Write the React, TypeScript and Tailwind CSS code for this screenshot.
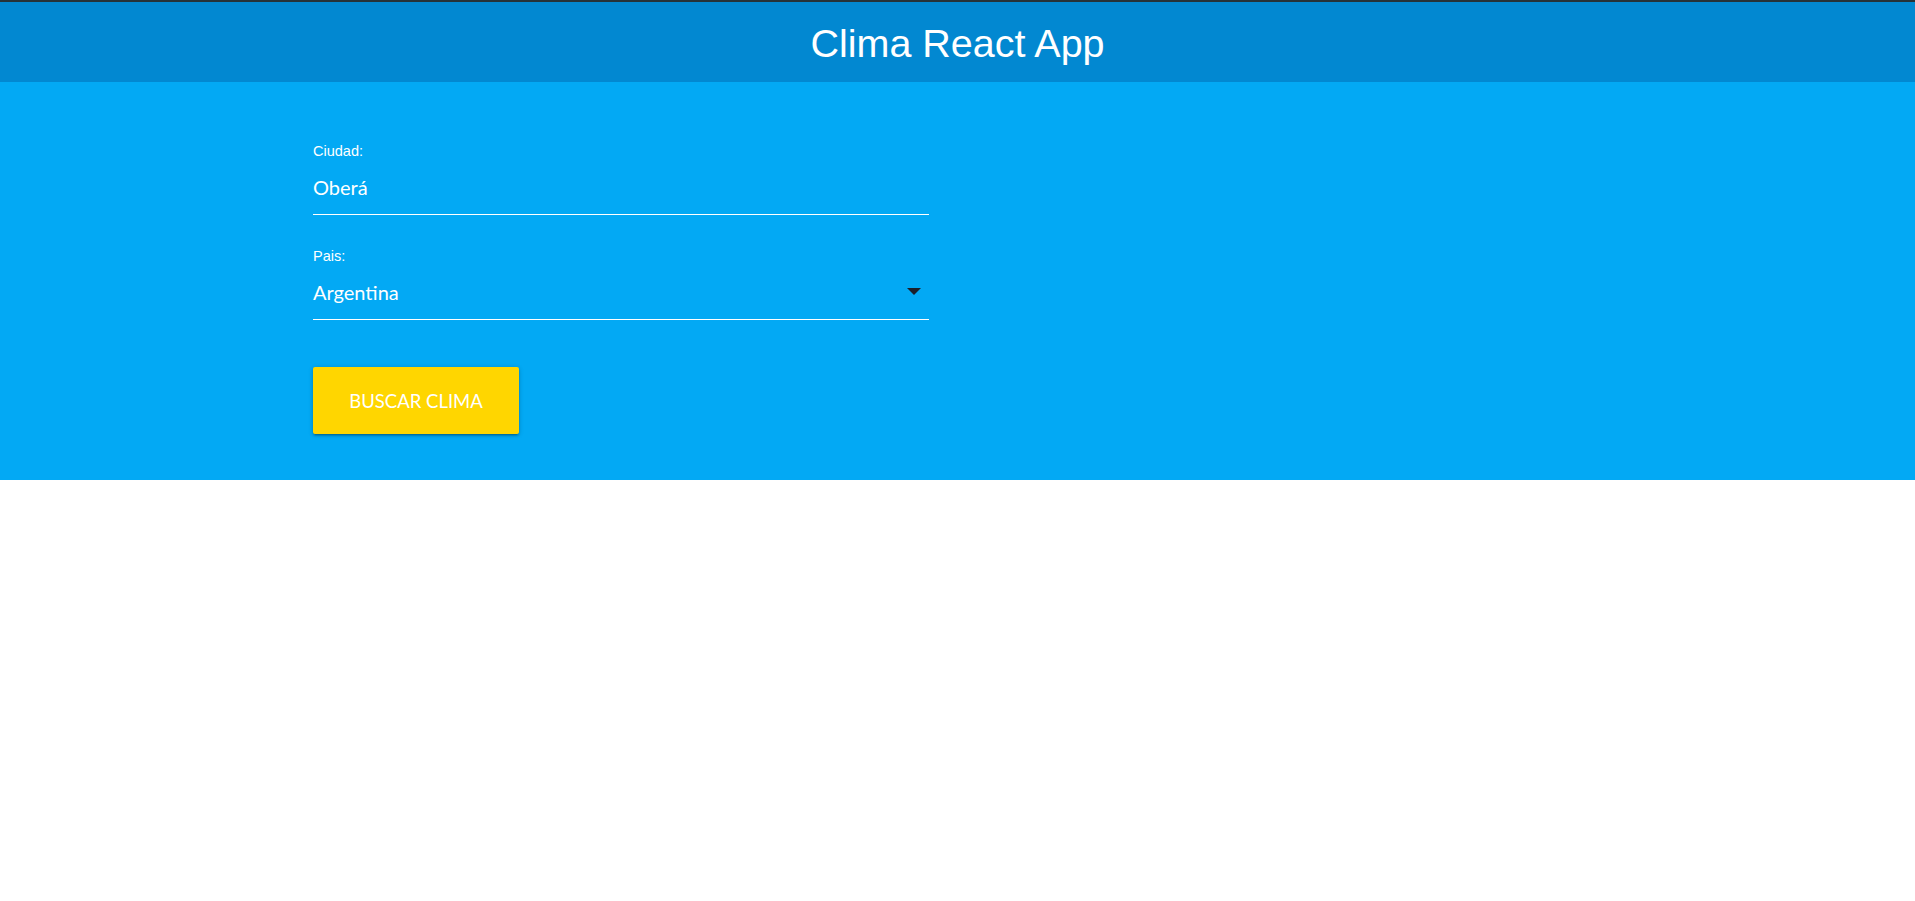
import { useState } from 'react'

const paises = ['Argentina', 'Colombia', 'Costa Rica', 'España', 'Estados Unidos', 'México', 'Perú']

export default function App() {
  const [ciudad, setCiudad] = useState('Oberá')
  const [pais] = useState(paises[0])

  return (
    <div className="min-h-screen bg-white">
      {/* Header */}
      <nav className="h-[82px] border-t-2 border-[#263238] bg-[#0288d1] flex items-center justify-center">
        <h1 className="mt-[2px] text-[39.5px] leading-[45px] text-white font-['Liberation_Sans',Arial,sans-serif]">
          Clima React App
        </h1>
      </nav>

      {/* Formulario */}
      <main className="bg-[#03a9f4] pt-[61px] pb-[46px]">
        <div className="mx-auto w-[1289px]">
          <form className="w-[616px] flex flex-col" onSubmit={e => e.preventDefault()}>
            <label
              htmlFor="ciudad"
              className="text-[14.5px] leading-4 text-white font-['Liberation_Sans',Arial,sans-serif]"
            >
              Ciudad:
            </label>
            <input
              id="ciudad"
              type="text"
              value={ciudad}
              onChange={e => setCiudad(e.target.value)}
              className="h-[56px] w-full border-b border-white bg-transparent text-[20px] text-white outline-none font-['Lato','Noto_Sans',sans-serif]"
            />

            <label className="mt-[33px] text-[14.5px] leading-4 text-white font-['Liberation_Sans',Arial,sans-serif]">
              Pais:
            </label>
            <div className="h-[56px] w-full border-b border-white flex items-center justify-between cursor-pointer">
              <span className="text-[20px] text-white font-['Lato','Noto_Sans',sans-serif]">{pais}</span>
              <svg className="mr-[8px] w-[14px] h-[7px]" viewBox="0 0 14 7" fill="#1b1f2a">
                <path d="M0 0h14L7 7z" />
              </svg>
            </div>

            <button
              type="submit"
              className="mt-[47px] h-[67px] w-[206px] rounded-[2px] bg-[#ffd600] pt-[2px] text-white text-[18.5px] font-['Lato','Noto_Sans',sans-serif] shadow-[0_2px_2px_0_rgba(0,0,0,0.14),0_3px_1px_-2px_rgba(0,0,0,0.12),0_1px_5px_0_rgba(0,0,0,0.2)]"
            >
              BUSCAR CLIMA
            </button>
          </form>
        </div>
      </main>
    </div>
  )
}
